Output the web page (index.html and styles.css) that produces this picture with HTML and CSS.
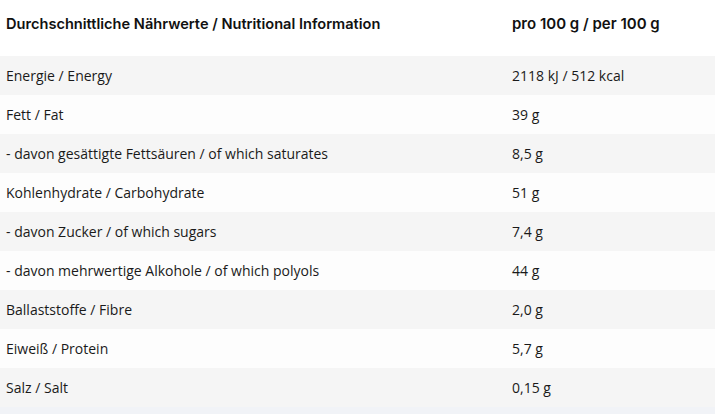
FILE: index.html
```html
<!DOCTYPE html>
<html lang="de">
<head>
<meta charset="utf-8">
<title>Nährwerte</title>
<link rel="stylesheet" href="styles.css">
</head>
<body>
<table class="nutrition">
  <colgroup><col class="col-name"><col class="col-value"></colgroup>
  <thead>
    <tr><th>Durchschnittliche Nährwerte / Nutritional Information</th><th class="th-value">pro 100 g / per 100 g</th></tr>
  </thead>
  <tbody>
    <tr><td>Energie / Energy</td><td>2118 kJ / 512 kcal</td></tr>
    <tr><td>Fett / Fat</td><td>39 g</td></tr>
    <tr><td>- davon gesättigte Fettsäuren / of which saturates</td><td>8,5 g</td></tr>
    <tr><td>Kohlenhydrate / Carbohydrate</td><td>51 g</td></tr>
    <tr><td>- davon Zucker / of which sugars</td><td>7,4 g</td></tr>
    <tr><td>- davon mehrwertige Alkohole / of which polyols</td><td>44 g</td></tr>
    <tr><td>Ballaststoffe / Fibre</td><td>2,0 g</td></tr>
    <tr><td>Eiweiß / Protein</td><td>5,7 g</td></tr>
    <tr><td>Salz / Salt</td><td>0,15 g</td></tr>
  </tbody>
</table>
</body>
</html>
```
FILE: styles.css
```css
html, body {
  margin: 0;
  padding: 0;
  background: #f1f3f7;
}
.nutrition {
  width: 100%;
  border-collapse: collapse;
  table-layout: fixed;
  font-family: "Open Sans", "Liberation Sans", sans-serif;
  font-size: 14px;
  color: #1a1a1a;
}
.col-name { width: 506px; }
.nutrition thead tr { background: #ffffff; }
.nutrition th {
  font-family: Inter, "Liberation Sans", sans-serif;
  font-weight: 600;
  font-size: 14.6px;
  color: #111111;
  text-align: left;
  padding: 14px 6px 22px;
  line-height: 20px;
  height: 20px;
}
.nutrition .th-value { font-size: 15px; }
.nutrition td {
  height: 39px;
  padding: 0 6px;
  line-height: 20px;
  box-sizing: border-box;
}
.nutrition tbody tr:nth-child(odd) { background: #f5f5f5; }
.nutrition tbody tr:nth-child(even) { background: #fdfdfd; }
```
